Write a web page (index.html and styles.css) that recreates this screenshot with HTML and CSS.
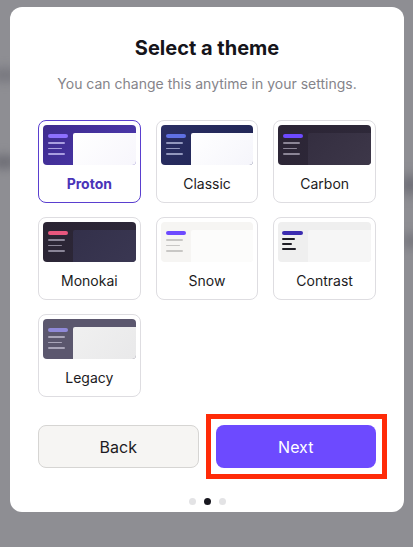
FILE: index.html
```html
<!DOCTYPE html>
<html lang="en">
<head>
<meta charset="utf-8">
<title>Select a theme</title>
<link rel="stylesheet" href="styles.css">
</head>
<body>
<div class="backdrop">
  <span class="blur blur-a"></span>
  <span class="blur blur-b"></span>
  <span class="blur blur-c"></span>
  <span class="blur blur-d"></span>
</div>
<main class="modal">
  <h1 class="title">Select a theme</h1>
  <p class="subtitle">You can change this anytime in your settings.</p>
  <div class="grid">
    <button class="card selected">
      <span class="thumb t-proton"><span class="side"><i class="pill"></i><i class="ln l1"></i><i class="ln l2"></i><i class="ln l3"></i></span><span class="panel"></span></span>
      <span class="label">Proton</span>
    </button>
    <button class="card">
      <span class="thumb t-classic"><span class="side"><i class="pill"></i><i class="ln l1"></i><i class="ln l2"></i><i class="ln l3"></i></span><span class="panel"></span></span>
      <span class="label">Classic</span>
    </button>
    <button class="card">
      <span class="thumb t-carbon"><span class="side"><i class="pill"></i><i class="ln l1"></i><i class="ln l2"></i><i class="ln l3"></i></span><span class="panel"></span></span>
      <span class="label">Carbon</span>
    </button>
    <button class="card">
      <span class="thumb t-monokai"><span class="side"><i class="pill"></i><i class="ln l1"></i><i class="ln l2"></i><i class="ln l3"></i></span><span class="panel"></span></span>
      <span class="label">Monokai</span>
    </button>
    <button class="card">
      <span class="thumb t-snow"><span class="side"><i class="pill"></i><i class="ln l1"></i><i class="ln l2"></i><i class="ln l3"></i></span><span class="panel"></span></span>
      <span class="label">Snow</span>
    </button>
    <button class="card">
      <span class="thumb t-contrast"><span class="side"><i class="pill"></i><i class="ln l1"></i><i class="ln l2"></i><i class="ln l3"></i></span><span class="panel"></span></span>
      <span class="label">Contrast</span>
    </button>
    <button class="card">
      <span class="thumb t-legacy"><span class="side"><i class="pill"></i><i class="ln l1"></i><i class="ln l2"></i><i class="ln l3"></i></span><span class="panel"></span></span>
      <span class="label">Legacy</span>
    </button>
  </div>
  <div class="actions">
    <button class="btn btn-back">Back</button>
    <div class="next-wrap">
      <button class="btn btn-next">Next</button>
      <span class="highlight"></span>
    </div>
  </div>
  <div class="dots">
    <span class="dot"></span>
    <span class="dot active"></span>
    <span class="dot"></span>
  </div>
</main>
</body>
</html>
```

FILE: styles.css
```css
* { box-sizing: border-box; }

html, body {
  margin: 0;
  height: 100%;
}

body {
  background: #8e8e93;
  font-family: Inter, "Noto Sans", "Liberation Sans", sans-serif;
  padding: 7px 9px 0 10px;
  position: relative;
  overflow: hidden;
}

.backdrop {
  position: absolute;
  inset: 0;
  pointer-events: none;
}

.blur {
  position: absolute;
  background: #6e6e76;
  filter: blur(6px);
  border-radius: 50%;
}
.blur-a { left: -10px; top: 70px; width: 30px; height: 10px; }
.blur-b { left: -10px; top: 157px; width: 28px; height: 10px; background: #5f5f68; }
.blur-c { right: -8px; top: 175px; width: 22px; height: 20px; }
.blur-d { right: -8px; top: 235px; width: 20px; height: 12px; }

.modal {
  position: relative;
  background: #ffffff;
  border-radius: 12px;
  width: 394px;
  height: 505px;
  padding: 29px 28px 0;
  display: flex;
  flex-direction: column;
  align-items: stretch;
}

.title {
  margin: 0;
  text-align: center;
  font-size: 20px;
  line-height: 24px;
  font-weight: 700;
  color: #15141a;
}

.subtitle {
  margin: 15px 0 0;
  text-align: center;
  font-size: 14px;
  line-height: 18px;
  color: #85848a;
}

.grid {
  margin-top: 27px;
  display: grid;
  grid-template-columns: repeat(3, 1fr);
  column-gap: 15px;
  row-gap: 14px;
}

.card {
  height: 83px;
  border: 1px solid #dedde1;
  border-radius: 8px;
  background: #fff;
  padding: 4px;
  display: flex;
  flex-direction: column;
  font-family: inherit;
  cursor: pointer;
}

.card.selected {
  border-color: #5a3fcf;
}

.label {
  flex: 1;
  display: flex;
  align-items: center;
  justify-content: center;
  font-size: 14px;
  color: #1c1b22;
  padding-top: 4px;
}

.selected .label {
  color: #4a34b8;
  font-weight: 700;
}

.thumb {
  display: flex;
  height: 40px;
  border-radius: 4px;
  overflow: hidden;
  padding-top: 8px;
}

.side {
  width: 30px;
  flex-shrink: 0;
  display: flex;
  flex-direction: column;
  padding: 1px 0 0 5px;
}

.panel {
  flex: 1;
  border-top-left-radius: 2px;
}

.pill {
  display: block;
  width: 20px;
  height: 4px;
  border-radius: 2px;
  margin-bottom: 4px;
}

.ln {
  display: block;
  height: 1.5px;
  border-radius: 1px;
  margin-bottom: 4px;
}
.l1 { width: 17px; }
.l2 { width: 14px; }
.l3 { width: 17px; }

/* Proton */
.t-proton { background: linear-gradient(135deg, #3e2b8e, #4d3ab0); }
.t-proton .panel { background: linear-gradient(135deg, #ffffff, #f7f6fc); }
.t-proton .pill { background: #8d70ff; }
.t-proton .ln { background: #a99ee0; }

/* Classic */
.t-classic { background: linear-gradient(135deg, #2a2e63, #1f2453); }
.t-classic .panel { background: linear-gradient(135deg, #ffffff, #f5f5fb); }
.t-classic .pill { background: #5f70e3; }
.t-classic .ln { background: #9297bd; }

/* Carbon */
.t-carbon { background: linear-gradient(135deg, #2b2435, #2f2a3a); }
.t-carbon .panel { background: linear-gradient(135deg, #342e40, #3d3749); }
.t-carbon .pill { background: #6d4aff; }
.t-carbon .ln { background: #8b8596; }

/* Monokai */
.t-monokai { background: linear-gradient(135deg, #2a2433, #2d283a); }
.t-monokai .panel { background: linear-gradient(135deg, #33304a, #3a3752); }
.t-monokai .pill { background: #e8577e; }
.t-monokai .ln { background: #8a8597; }

/* Snow */
.t-snow { background: #f6f5f3; }
.t-snow .panel { background: #fcfcfb; }
.t-snow .pill { background: #6d4aff; }
.t-snow .ln { background: #c8c7c5; }

/* Contrast */
.t-contrast { background: #efefef; }
.t-contrast .panel { background: #f6f6f6; }
.t-contrast .side { padding-left: 4px; }
.t-contrast .pill { background: #3b2cb0; width: 21px; height: 3.5px; margin-bottom: 3px; }
.t-contrast .ln { background: #1f1e26; height: 2px; margin-bottom: 3px; }
.t-contrast .l1 { width: 13px; }
.t-contrast .l2 { width: 10px; }
.t-contrast .l3 { width: 14px; }

/* Legacy */
.t-legacy { background: #5b576e; }
.t-legacy .panel { background: linear-gradient(135deg, #f0f0f0, #e9e9ea); }
.t-legacy .pill { background: #8f89d9; }
.t-legacy .ln { background: #a9a5b9; }

.actions {
  margin-top: 28px;
  display: grid;
  grid-template-columns: 1fr 1fr;
  gap: 17px;
}

.btn {
  height: 43px;
  border-radius: 8px;
  font-family: inherit;
  font-size: 16px;
  width: 100%;
  cursor: pointer;
}

.btn-back {
  background: #f6f5f3;
  border: 1px solid #d6d5d3;
  color: #1c1b22;
}

.next-wrap {
  position: relative;
}

.btn-next {
  background: #6d4aff;
  border: none;
  color: #ffffff;
}

.highlight {
  position: absolute;
  inset: -11px -11px -11px -10px;
  border: 5px solid #ff2b08;
  pointer-events: none;
}

.dots {
  margin-top: 30px;
  display: flex;
  justify-content: center;
  gap: 8px;
}

.dot {
  width: 7px;
  height: 7px;
  border-radius: 50%;
  background: #e3e3e5;
}

.dot.active {
  background: #18171f;
}
```
